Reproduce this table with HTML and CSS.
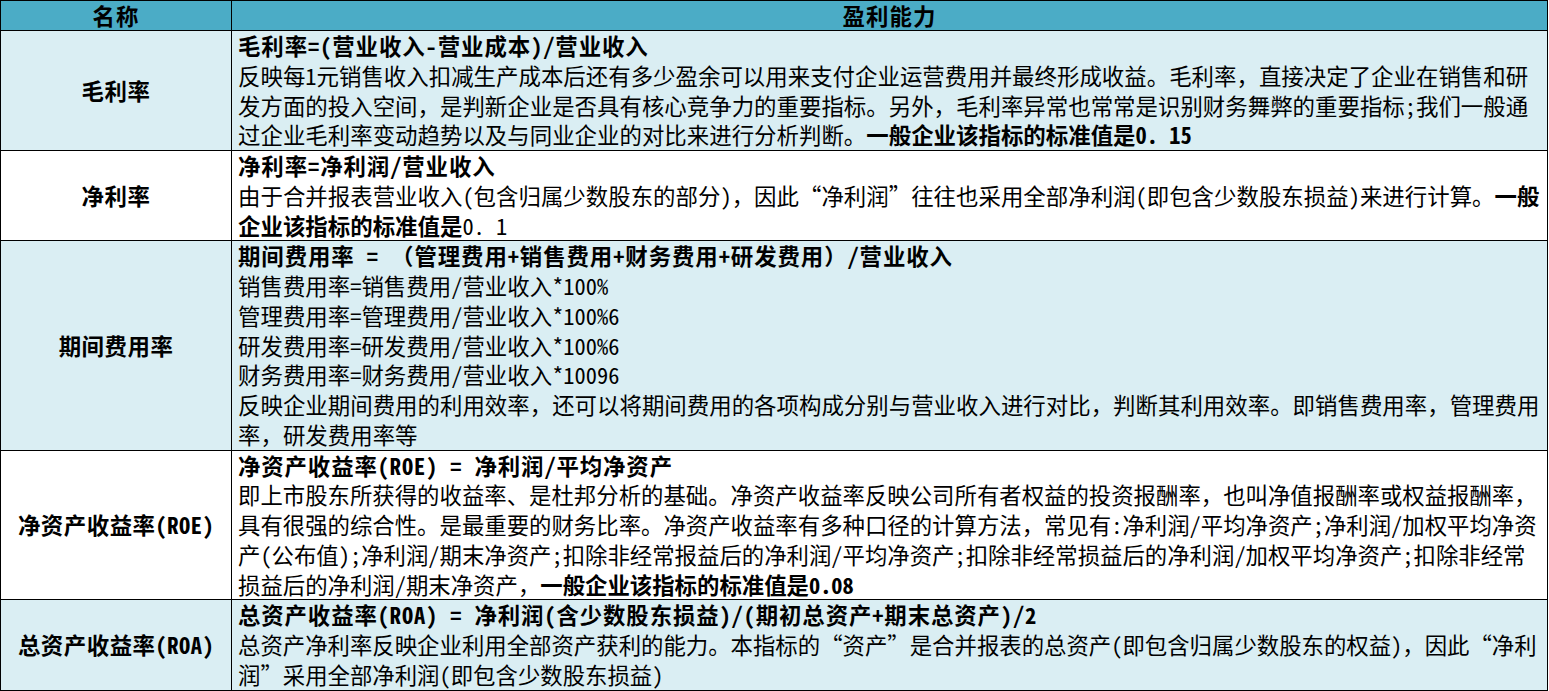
FILE: index.html
```html
<!DOCTYPE html>
<html lang="zh-CN">
<head>
<meta charset="utf-8">
<title>盈利能力</title>
<link rel="stylesheet" href="styles.css">
</head>
<body>
<table class="sheet">
  <colgroup>
    <col class="col-name">
    <col class="col-desc">
  </colgroup>
  <thead>
    <tr class="head">
      <th>名称</th>
      <th>盈利能力</th>
    </tr>
  </thead>
  <tbody>
    <tr class="tint">
      <td class="name">毛利率</td>
      <td class="desc"><b class="title">毛利率=(营业收入-营业成本)/营业收入</b><br>反映每1元销售收入扣减生产成本后还有多少盈余可以用来支付企业运营费用并最终形成收益。毛利率，直接决定了企业在销售和研<br>发方面的投入空间，是判新企业是否具有核心竞争力的重要指标。另外，毛利率异常也常常是识别财务舞弊的重要指标;我们一般通<br>过企业毛利率变动趋势以及与同业企业的对比来进行分析判断。<b>一般企业该指标的标准值是0. 15</b></td>
    </tr>
    <tr>
      <td class="name">净利率</td>
      <td class="desc"><b class="title">净利率=净利润/营业收入</b><br>由于合并报表营业收入(包含归属少数股东的部分)，因此“净利润”往往也采用全部净利润(即包含少数股东损益)来进行计算。<b>一般</b><br><b>企业该指标的标准值是</b>0. 1</td>
    </tr>
    <tr class="tint">
      <td class="name">期间费用率</td>
      <td class="desc"><b class="title">期间费用率 = （管理费用+销售费用+财务费用+研发费用）/营业收入</b><br>销售费用率=销售费用/营业收入*100%<br>管理费用率=管理费用/营业收入*100%6<br>研发费用率=研发费用/营业收入*100%6<br>财务费用率=财务费用/营业收入*10096<br>反映企业期间费用的利用效率，还可以将期间费用的各项构成分别与营业收入进行对比，判断其利用效率。即销售费用率，管理费用<br>率，研发费用率等</td>
    </tr>
    <tr class="narrow">
      <td class="name">净资产收益率(ROE)</td>
      <td class="desc"><b class="title">净资产收益率(ROE) = 净利润/平均净资产</b><br>即上市股东所获得的收益率、是杜邦分析的基础。净资产收益率反映公司所有者权益的投资报酬率，也叫净值报酬率或权益报酬率，<br>具有很强的综合性。是最重要的财务比率。净资产收益率有多种口径的计算方法，常见有:净利润/平均净资产;净利润/加权平均净资<br>产(公布值);净利润/期末净资产;扣除非经常报益后的净利润/平均净资产;扣除非经常损益后的净利润/加权平均净资产;扣除非经常<br>损益后的净利润/期末净资产，<b>一般企业该指标的标准值是0.08</b></td>
    </tr>
    <tr class="tint narrow">
      <td class="name">总资产收益率(ROA)</td>
      <td class="desc"><b class="title">总资产收益率(ROA) = 净利润(含少数股东损益)/(期初总资产+期末总资产)/2</b><br>总资产净利率反映企业利用全部资产获利的能力。本指标的“资产”是合并报表的总资产(即包含归属少数股东的权益)，因此“净利<br>润”采用全部净利润(即包含少数股东损益)</td>
    </tr>
  </tbody>
</table>
</body>
</html>
```

FILE: styles.css
```css
html, body {
  margin: 0;
  padding: 0;
  background: #ffffff;
}

body {
  font-family: "Noto Sans Mono CJK SC", "Noto Sans CJK SC", "Liberation Sans", sans-serif;
  font-size: 22.45px;
  color: #000000;
}

.sheet {
  border-collapse: collapse;
  table-layout: fixed;
  width: 1548px;
}

.col-name {
  width: 231px;
}

.sheet th,
.sheet td {
  border: 1px solid #000000;
  padding: 0 6px;
  line-height: 29.75px;
  white-space: nowrap;
  overflow: hidden;
}

.head th {
  background: #4bacc6;
  font-weight: bold;
  text-align: center;
  line-height: 29px;
  letter-spacing: 1px;
}

.tint td {
  background: #daeef3;
}

.narrow .desc {
  font-size: 22.4px;
}

.name {
  text-align: center;
  font-weight: bold;
  vertical-align: middle;
  letter-spacing: 0.5px;
}

.desc {
  text-align: left;
  vertical-align: top;
}

.desc b {
  font-weight: bold;
}

.desc .title {
  letter-spacing: 0.9px;
}
```
